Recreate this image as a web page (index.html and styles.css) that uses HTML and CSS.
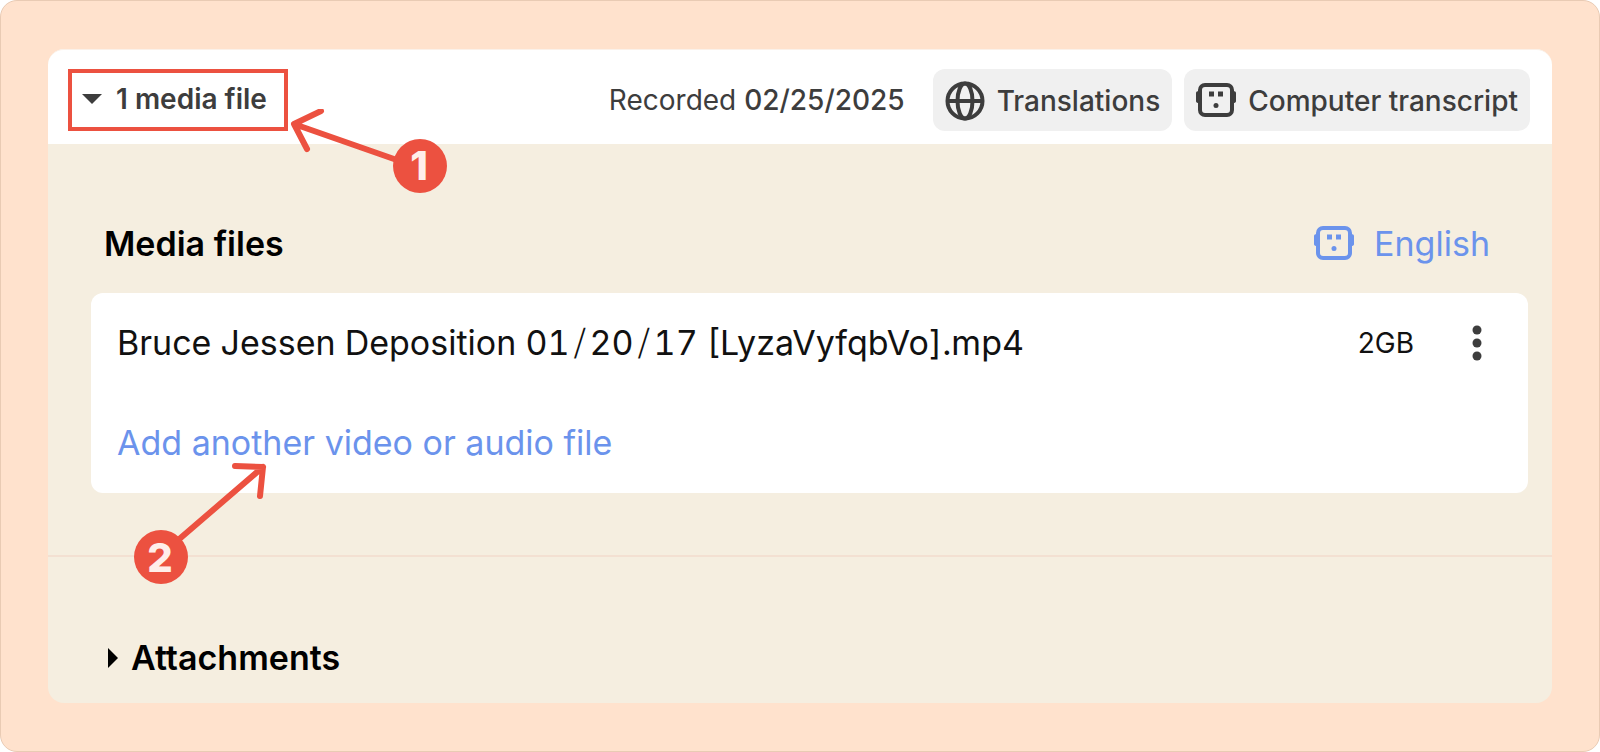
FILE: index.html
```
<!DOCTYPE html>
<html lang="en">
  <head>
    <meta charset="UTF-8" />
    <meta name="viewport" content="width=device-width, initial-scale=1.0" />
    <title>Media files</title>
    <link rel="stylesheet" href="styles.css">
  </head>
  <body>
    <main class="frame">
      <div class="panel">
        <header class="topbar">
          <div class="toggle-wrap">
            <button type="button" class="toggle" aria-expanded="true">
              <svg class="caret-down" viewBox="0 0 20 10" aria-hidden="true">
                <path d="M0 0h20L10 10z" />
              </svg>
              1 media file
            </button>
            <svg class="callout callout-one" viewBox="0 0 170 90" aria-hidden="true">
              <path d="M110 50L10 15M37 2L10 15L23 40" />
              <circle cx="136" cy="57" r="27" />
              <text x="135" y="71">1</text>
            </svg>
          </div>
          <div class="actions">
            <p class="recorded">Recorded <strong>02/25/2025</strong></p>
            <button type="button" class="pill">
              <svg class="icon" viewBox="0 0 40 40" aria-hidden="true">
                <circle cx="20" cy="20" r="17.5" />
                <ellipse cx="20" cy="20" rx="7.5" ry="17.5" />
                <path d="M3 20h34" />
              </svg>
              Translations
            </button>
            <button type="button" class="pill">
              <svg class="icon robot" viewBox="0 0 40 40" aria-hidden="true">
                <rect x="4" y="4" width="32" height="30" rx="5" />
                <path class="solid" d="M0 12q0-2 3-2v12q-3 0-3-2zM40 12q0-2-3-2v12q3 0 3-2zM13 10.500h5v5h-5zM22 10.500h5v5h-5z" />
                <circle class="solid" cx="20" cy="24.500" r="2.500" />
              </svg>
              Computer transcript
            </button>
          </div>
        </header>

        <section class="media">
          <div class="media-head">
            <h2>Media files</h2>
            <a href="#" class="language">
              <svg class="icon robot" viewBox="0 0 40 40" aria-hidden="true">
                <rect x="4" y="4" width="32" height="30" rx="5" />
                <path class="solid" d="M0 12q0-2 3-2v12q-3 0-3-2zM40 12q0-2-3-2v12q3 0 3-2zM13 10.500h5v5h-5zM22 10.500h5v5h-5z" />
                <circle class="solid" cx="20" cy="24.500" r="2.500" />
              </svg>
              English
            </a>
          </div>
          <div class="files">
            <div class="file">
              <span class="file-name">Bruce Jessen Deposition 01<span class="slash">⧸</span>20<span class="slash">⧸</span>17 [LyzaVyfqbVo].mp4</span>
              <span class="file-size">2GB</span>
              <button type="button" class="more" aria-label="More options">
                <svg viewBox="0 0 10 36" aria-hidden="true">
                  <circle cx="5" cy="5" r="4.500" />
                  <circle cx="5" cy="18" r="4.500" />
                  <circle cx="5" cy="31" r="4.500" />
                </svg>
              </button>
            </div>
            <div class="file add">
              <a href="#">Add another video or audio file</a>
              <svg class="callout callout-two" viewBox="0 0 150 130" aria-hidden="true">
                <path d="M60 84L146 10M118 9L146 10L143 39" />
                <circle cx="44" cy="100" r="27" />
                <text x="43" y="115">2</text>
              </svg>
            </div>
          </div>
        </section>

        <section class="attachments">
          <button type="button" class="toggle-attachments" aria-expanded="false">
            <svg class="caret-right" viewBox="0 0 10 20" aria-hidden="true">
              <path d="M0 0v20L10 10z" />
            </svg>
            Attachments
          </button>
        </section>
      </div>
    </main>
  </body>
</html>
```
FILE: styles.css
```
* {
  box-sizing: border-box;
}

body {
  margin: 0;
  background: #fff;
  color: #111;
  font-family: "Inter", sans-serif;
  font-optical-sizing: none;
}

button {
  border: none;
  background: none;
  padding: 0;
  font: inherit;
  color: inherit;
  cursor: pointer;
}

a {
  color: #6b93ec;
  text-decoration: none;
}

h2,
p {
  margin: 0;
}

.frame {
  min-height: 100vh;
  padding: 48px 47px;
  border: 1px solid #e9cbb4;
  border-radius: 17px;
  background: #ffe2cd;
}

.panel {
  border-radius: 16px;
  background: #f5eee0;
}

.topbar {
  display: flex;
  justify-content: space-between;
  align-items: center;
  padding: 19px 22px 13px 20px;
  border-top: 1px solid #fbf1e9;
  border-radius: 16px 16px 0 0;
  background: #fff;
  color: #3d3d3d;
  font-size: 28px;
  line-height: 34px;
}

.toggle-wrap {
  position: relative;
}

.toggle {
  display: flex;
  align-items: center;
  gap: 14px;
  height: 62px;
  padding: 0 17px 2px 10px;
  border: 4px solid #ec5140;
  font-weight: 600;
}

.caret-down {
  width: 20px;
  height: 10px;
  fill: currentColor;
}

.actions {
  display: flex;
  align-items: center;
  gap: 12px;
}

.recorded {
  margin-right: 16px;
}

.recorded strong {
  font-weight: 500;
}

.pill {
  display: flex;
  align-items: center;
  gap: 12px;
  height: 62px;
  padding: 2px 12px 0;
  border-radius: 12px;
  background: #f0f0f0;
  font-weight: 500;
}

.icon {
  width: 40px;
  height: 40px;
  fill: none;
  stroke: currentColor;
  stroke-width: 4;
}

.icon .solid {
  fill: currentColor;
  stroke: none;
}

.media {
  padding: 76px 24px 62px 43px;
  border-bottom: 2px solid #f3e0d2;
  font-size: 34px;
  line-height: 48px;
}

.media-head {
  display: flex;
  justify-content: space-between;
  align-items: center;
  padding: 0 38px 25px 13px;
}

.media-head h2 {
  color: #000;
  font-size: 34px;
  font-weight: 600;
}

.language {
  display: flex;
  align-items: center;
  gap: 20px;
}

.files {
  border-radius: 12px;
  background: #fff;
}

.file {
  display: flex;
  align-items: center;
  height: 100px;
  padding: 0 36px 0 26px;
}

.file-name {
  flex: 1;
  font-variant-numeric: tabular-nums;
}

.slash {
  padding: 0 4px;
}

.file-size {
  font-size: 28px;
}

.more {
  display: flex;
  justify-content: center;
  width: 30px;
  margin-left: 48px;
}

.more svg {
  width: 10px;
  height: 36px;
  fill: #3d3d3d;
}

.add {
  position: relative;
}

.attachments {
  padding: 77px 60px 21px;
}

.toggle-attachments {
  display: flex;
  align-items: center;
  gap: 13px;
  color: #000;
  font-size: 34px;
  font-weight: 600;
  line-height: 48px;
}

.caret-right {
  width: 10px;
  height: 20px;
}

/* numbered arrows on top of the panel */
.callout {
  position: absolute;
  fill: none;
  stroke: #ec5140;
  stroke-width: 6;
  stroke-linecap: round;
  stroke-linejoin: round;
  pointer-events: none;
}

.callout circle {
  fill: #ec5140;
  stroke: none;
}

.callout text {
  fill: #ffeeea;
  stroke: none;
  font-size: 40px;
  font-weight: 800;
  text-anchor: middle;
}

.callout-one {
  top: 40px;
  left: 216px;
  width: 170px;
  height: 90px;
}

.callout-two {
  top: 64px;
  left: 26px;
  width: 150px;
  height: 130px;
}
```
